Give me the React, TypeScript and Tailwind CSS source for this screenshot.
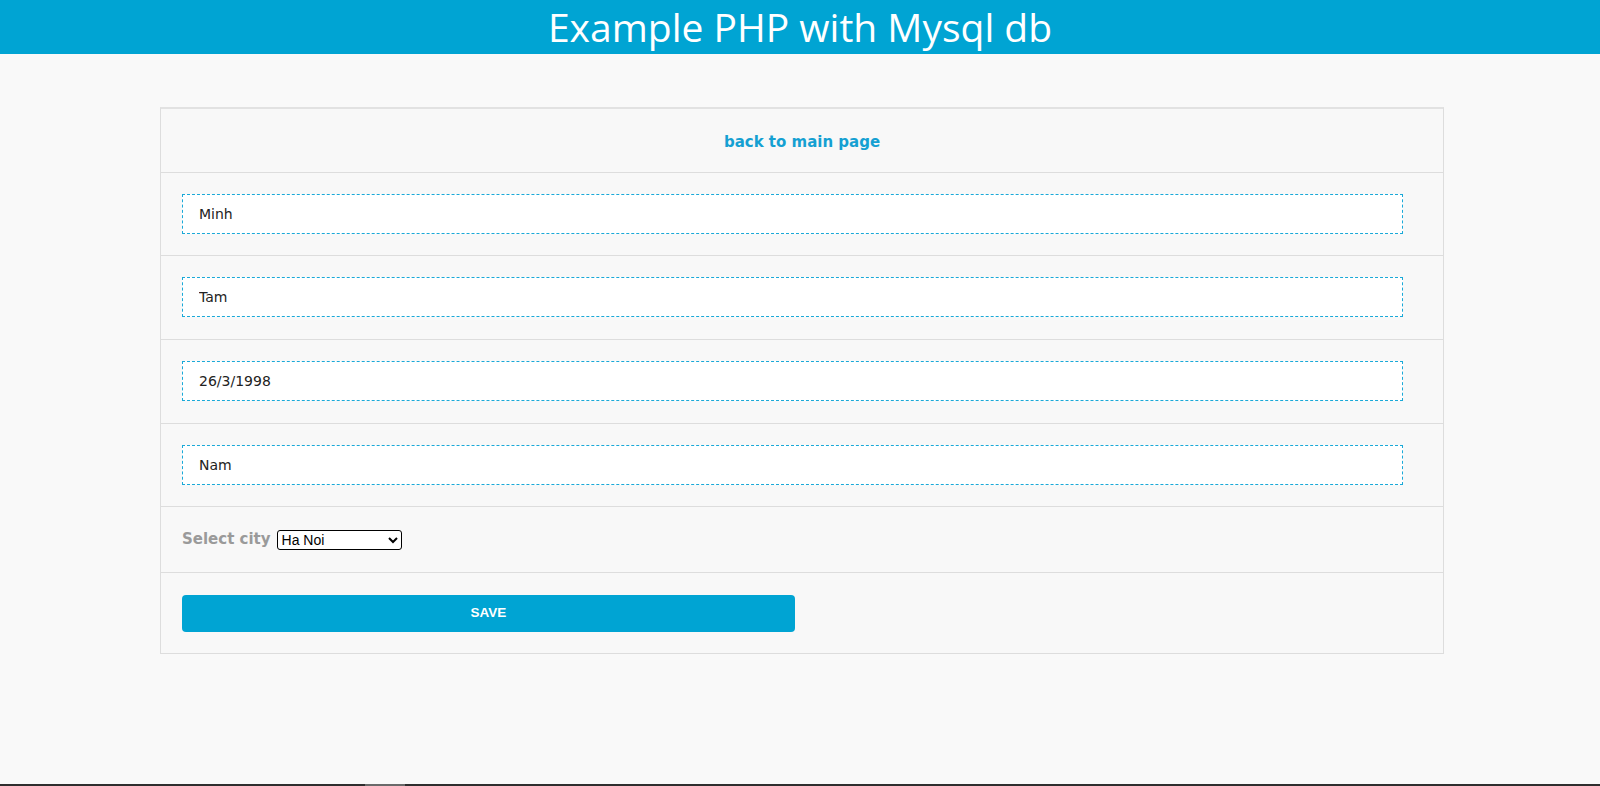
const fields = [
  { value: "Minh", pb: "pb-[21px]" },
  { value: "Tam", pb: "pb-[22px]" },
  { value: "26/3/1998", pb: "pb-[22px]" },
  { value: "Nam", pb: "pb-[21px]" },
];

export default function App() {
  return (
    <div className="h-[786px] flex flex-col bg-[#f9f9f9] font-['DejaVu_Sans',sans-serif]">
      <header className="h-[54px] bg-[#00a4d3] flex justify-center items-center">
        <h1 className="text-[39px] leading-[54px] text-white font-['Open_Sans',sans-serif]">
          Example PHP with Mysql db
        </h1>
      </header>

      <div className="flex-1">
        <div className="ml-[160px] mt-[53px] w-[1284px] border border-t-2 border-[#dddddd] border-t-[#e2e2e2] bg-[#f8f8f8]">
          <div className="h-[63px] pt-[4px] flex items-center justify-center">
            <a href="#" className="text-[15px] font-bold text-[#15a0d2]">
              back to main page
            </a>
          </div>

          {fields.map((f) => (
            <div key={f.value} className={`border-t border-[#dddddd] pl-[21px] pt-[21px] ${f.pb}`}>
              <input
                type="text"
                defaultValue={f.value}
                className="w-[1221px] h-10 bg-white border border-dashed border-[#1aa9d8] pl-4 text-[14px] text-[#222] outline-none"
              />
            </div>
          ))}

          <div className="h-[66px] border-t border-[#dddddd] pl-[21px] flex items-center gap-[6px]">
            <span className="text-[15px] font-bold text-[#9a9a9a]">Select city</span>
            <select
              defaultValue="hanoi"
              className="w-[125px] h-5 bg-white border border-black rounded-[3px] text-[14px] leading-4 text-black font-['Liberation_Sans',sans-serif]"
            >
              <option value="hanoi">Ha Noi</option>
              <option value="hcm">Ho Chi Minh</option>
              <option value="danang">Da Nang</option>
            </select>
          </div>

          <div className="border-t border-[#dddddd] pl-[21px] pt-[22px] pb-[21px]">
            <button className="w-[613px] h-[37px] rounded-[4px] bg-[#00a4d3] text-white text-[13.5px] font-bold font-['Liberation_Sans',sans-serif]">
              SAVE
            </button>
          </div>
        </div>
      </div>

      <div className="h-[2px] bg-[#2e2e2e] flex">
        <div className="ml-[365px] w-[40px] bg-[#6a6a6a]" />
      </div>
    </div>
  );
}
